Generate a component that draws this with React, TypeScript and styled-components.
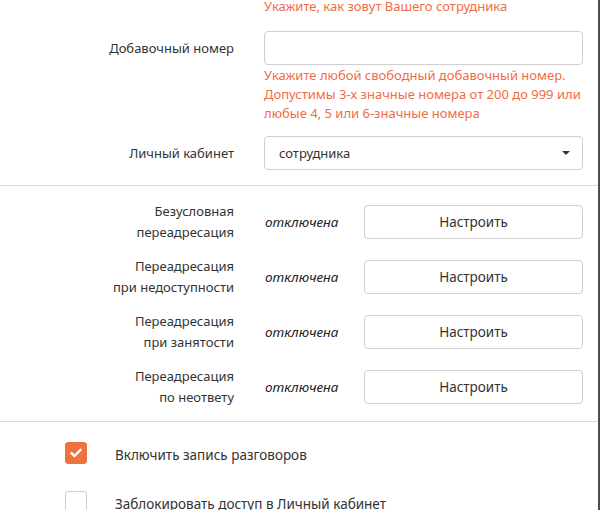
import React from "react";
import styled, { createGlobalStyle } from "styled-components";

const Global = createGlobalStyle`
  html, body { margin: 0; padding: 0; background: #fff; }
  body { font-family: "Noto Sans", "Open Sans", sans-serif; font-size: 13px; color: #333; }
  * { box-sizing: border-box; }
`;

const Page = styled.div`
  width: 600px;
  height: 510px;
  overflow: hidden;
  border-right: 2px solid #4d4d4d;
`;

const Section = styled.div<{ $pt?: number; $pb?: number }>`
  padding-top: ${(p) => p.$pt ?? 0}px;
  padding-bottom: ${(p) => p.$pb ?? 0}px;
  display: flex;
  flex-direction: column;
`;

const Divider = styled.div`
  height: 1px;
  background: #d9d9d9;
  width: 598px;
`;

const FieldRow = styled.div<{ $mt?: number }>`
  display: grid;
  grid-template-columns: 234px 319px;
  column-gap: 30px;
  margin-top: ${(p) => p.$mt ?? 0}px;
`;

const Label = styled.div`
  text-align: right;
  height: 34px;
  line-height: 34px;
  color: #333;
`;

const Hint = styled.div`
  color: #f26b46;
  line-height: 19px;
  margin-top: 1px;
`;

const TopHint = styled(Hint)`
  margin: -3px 0 0 264px;
`;

const Input = styled.input`
  width: 319px;
  height: 34px;
  border: 1px solid #cfcfcf;
  border-radius: 4px;
  padding: 0 12px;
  font: inherit;
  outline: none;
  display: block;
`;

const Select = styled.div`
  width: 319px;
  height: 34px;
  border: 1px solid #cfcfcf;
  border-radius: 4px;
  padding: 0 10px 0 14px;
  display: flex;
  align-items: center;
  justify-content: space-between;
  color: #333;
`;

const Caret = styled.span`
  width: 0;
  height: 0;
  border-left: 4px solid transparent;
  border-right: 4px solid transparent;
  border-top: 4px solid #333;
  margin-right: 2px;
`;

const FwdList = styled.div`
  display: flex;
  flex-direction: column;
  gap: 13px;
`;

const FwdRow = styled.div`
  display: grid;
  grid-template-columns: 234px 130px 219px;
  align-items: center;
  height: 42px;
`;

const FwdLabel = styled.div`
  text-align: right;
  line-height: 21px;
  color: #333;
`;

const Status = styled.div`
  font-style: italic;
  font-size: 13.5px;
  padding-left: 31px;
  color: #222;
  white-space: nowrap;
`;

const FwdButton = styled.button`
  height: 34px;
  border: 1px solid #cfcfcf;
  border-radius: 4px;
  background: #fff;
  font: inherit;
  font-size: 13.5px;
  color: #333;
`;

const CheckList = styled.div`
  display: flex;
  flex-direction: column;
  gap: 27px;
  padding-left: 65px;
  padding-top: 20px;
`;

const CheckRow = styled.label`
  display: flex;
  align-items: center;
  gap: 28px;
  color: #333;
  font-size: 13.5px;
`;

const Box = styled.span<{ $on?: boolean }>`
  width: 22px;
  height: 22px;
  border-radius: 3px;
  flex: none;
  display: flex;
  align-items: center;
  justify-content: center;
  background: ${(p) => (p.$on ? "#f07140" : "#fff")};
  border: 1px solid ${(p) => (p.$on ? "#f07140" : "#cfcfcf")};
`;

const CheckText = styled.span`
  margin-top: 3px;
`;

const rows = [
  ["Безусловная", "переадресация"],
  ["Переадресация", "при недоступности"],
  ["Переадресация", "при занятости"],
  ["Переадресация", "по неответу"],
];

export default function App() {
  return (
    <Page>
      <Global />
      <Section $pb={15}>
        <TopHint>Укажите, как зовут Вашего сотрудника</TopHint>
        <FieldRow $mt={15}>
          <Label>Добавочный номер</Label>
          <div>
            <Input />
            <Hint>
              Укажите любой свободный добавочный номер.
              <br />
              Допустимы 3-х значные номера от 200 до 999 или
              <br />
              любые 4, 5 или 6-значные номера
            </Hint>
          </div>
        </FieldRow>
        <FieldRow $mt={13}>
          <Label>Личный кабинет</Label>
          <Select>
            <span>сотрудника</span>
            <Caret />
          </Select>
        </FieldRow>
      </Section>
      <Divider />
      <Section $pt={15} $pb={13}>
        <FwdList>
          {rows.map((r, i) => (
            <FwdRow key={i}>
              <FwdLabel>
                {r[0]}
                <br />
                {r[1]}
              </FwdLabel>
              <Status>отключена</Status>
              <FwdButton>Настроить</FwdButton>
            </FwdRow>
          ))}
        </FwdList>
      </Section>
      <Divider />
      <CheckList>
        <CheckRow>
          <Box $on>
            <svg width="12" height="10" viewBox="0 0 12 10">
              <path d="M1.5 5.2 L4.5 8 L10.5 1.8" fill="none" stroke="#fff" strokeWidth="2.4" strokeLinecap="round" strokeLinejoin="round" />
            </svg>
          </Box>
          <CheckText>Включить запись разговоров</CheckText>
        </CheckRow>
        <CheckRow>
          <Box />
          <CheckText>Заблокировать доступ в Личный кабинет</CheckText>
        </CheckRow>
      </CheckList>
    </Page>
  );
}
